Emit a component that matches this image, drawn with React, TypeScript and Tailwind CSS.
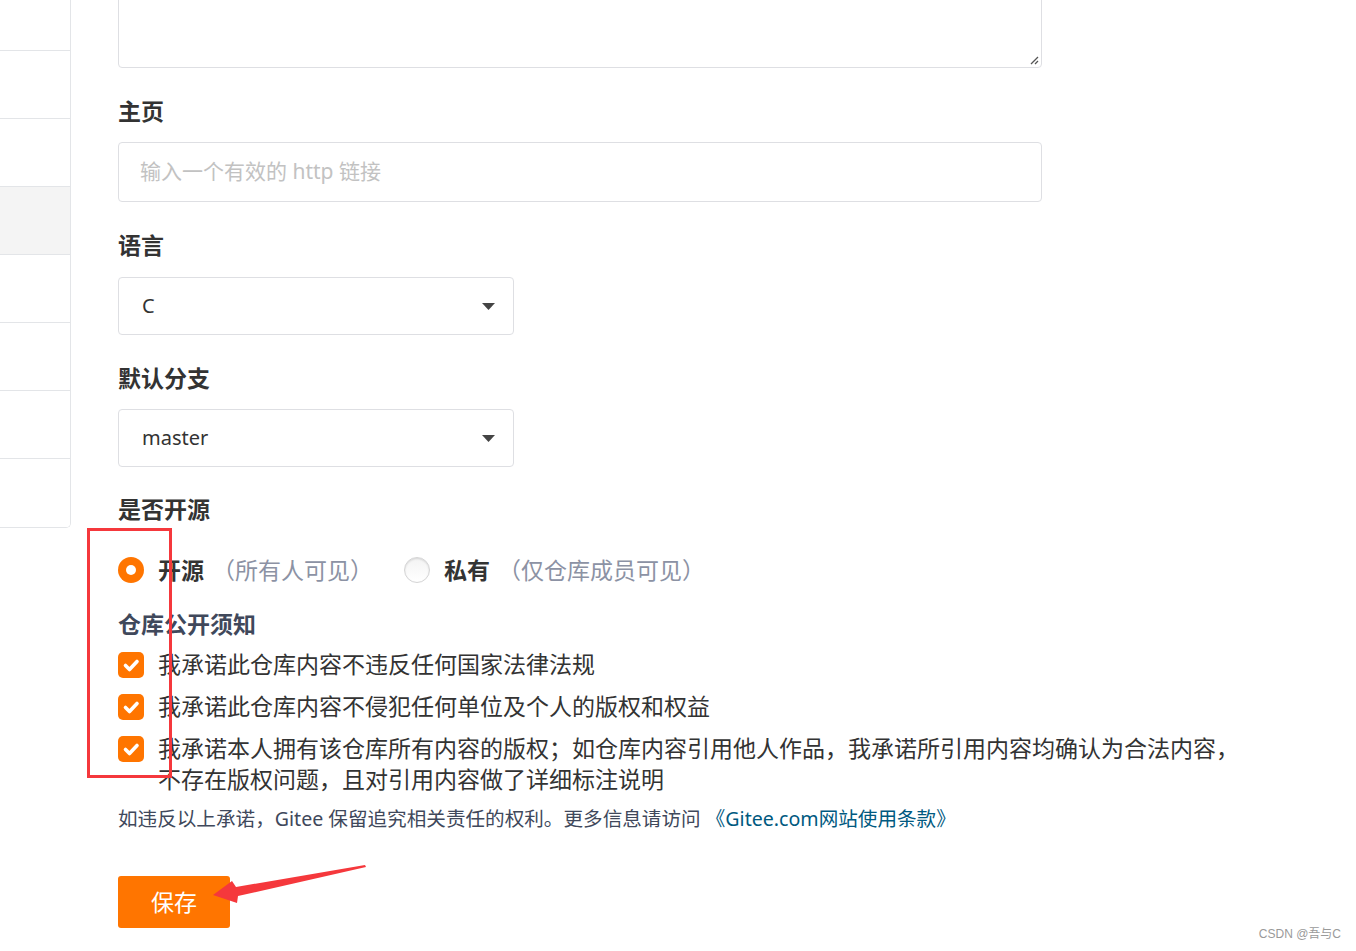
const font = "font-['Noto_Sans','Noto_Sans_CJK_SC',sans-serif]";

function Label({ children }: { children: React.ReactNode }) {
  return <div className="text-[23px] leading-[30px] font-bold text-[#333]">{children}</div>;
}

function SelectBox({ value }: { value: string }) {
  return (
    <div className="w-[396px] h-[58px] border border-[#dedfe3] rounded-[4px] flex items-center justify-between pl-[23px] pr-[18px] text-[20px] text-[#333]">
      <span>{value}</span>
      <svg width="13" height="7" viewBox="0 0 13 7">
        <path d="M0 0 H13 L6.5 7 Z" fill="#444" />
      </svg>
    </div>
  );
}

function CheckItem({ children }: { children: React.ReactNode }) {
  return (
    <div className="flex items-start gap-[14px] w-[1140px]">
      <div className="mt-[3px] w-[26px] h-[26px] shrink-0 rounded-[5px] bg-[#ff7500] flex items-center justify-center">
        <svg width="26" height="26" viewBox="0 0 26 26">
          <path d="M7.5 13.5 L11.5 17.5 L19 9.5" fill="none" stroke="#fff" strokeWidth="3.6" strokeLinecap="round" strokeLinejoin="round" />
        </svg>
      </div>
      <div className="text-[23px] leading-[31px] text-[#333]">{children}</div>
    </div>
  );
}

export default function App() {
  const sideRows = [0, 1, 2, 3, 4, 5, 6, 7];
  return (
    <div className={`relative h-[951px] w-full overflow-hidden bg-white ${font}`}>
      <div className="flex">
        {/* left menu */}
        <div className="w-[71px] shrink-0 -mt-[17px] self-start border-r border-b border-[#e3e5e8] rounded-br-[5px] overflow-hidden">
          {sideRows.map((i) => (
            <div
              key={i}
              className={`h-[68px] ${i < 7 ? "border-b border-[#e3e5e8]" : ""} ${i === 3 ? "bg-[#f4f4f4]" : "bg-white"}`}
            />
          ))}
        </div>

        {/* form */}
        <div className="ml-[47px] flex flex-col">
          <div className="relative w-[924px] h-[101px] -mt-[33px] border border-[#dedfe3] rounded-[4px]">
            <svg className="absolute right-[2px] bottom-[2px]" width="10" height="10" viewBox="0 0 10 10">
              <path d="M9 2 L2 9 M9 6 L6 9" stroke="#555" strokeWidth="1.3" />
            </svg>
          </div>

          <div className="mt-[28px] mb-[16px]"><Label>主页</Label></div>
          <div className="w-[924px] h-[60px] border border-[#dedfe3] rounded-[4px] flex items-center px-[21px] text-[21px] text-[#c2c2c2]">
            输入一个有效的 http 链接
          </div>

          <div className="mt-[28px] mb-[17px]"><Label>语言</Label></div>
          <SelectBox value="C" />

          <div className="mt-[28px] mb-[16px]"><Label>默认分支</Label></div>
          <SelectBox value="master" />

          <div className="mt-[27px]"><Label>是否开源</Label></div>

          <div className="mt-[31px] flex items-center h-[30px] text-[23px]">
            <span className="w-[26px] h-[26px] rounded-full bg-[#ff7500] flex items-center justify-center">
              <span className="w-[10px] h-[10px] rounded-full bg-white" />
            </span>
            <span className="ml-[14px] font-bold text-[#333]">开源</span>
            <span className="ml-[8px] text-[#8c92a4]">（所有人可见）</span>
            <span className="ml-[31px] w-[26px] h-[26px] rounded-full border border-[#d4d4d5] bg-gradient-to-b from-[#f3f3f3] to-white shadow-[inset_0_1px_2px_rgba(0,0,0,0.12)]" />
            <span className="ml-[14px] font-bold text-[#333]">私有</span>
            <span className="ml-[8px] text-[#8c92a4]">（仅仓库成员可见）</span>
          </div>

          <div className="mt-[24px] text-[23px] leading-[30px] font-bold text-[#40485b]">仓库公开须知</div>

          <div className="mt-[10px] flex flex-col gap-[11px]">
            <CheckItem>我承诺此仓库内容不违反任何国家法律法规</CheckItem>
            <CheckItem>我承诺此仓库内容不侵犯任何单位及个人的版权和权益</CheckItem>
            <CheckItem>
              我承诺本人拥有该仓库所有内容的版权；如仓库内容引用他人作品，我承诺所引用内容均确认为合法内容，不存在版权问题，且对引用内容做了详细标注说明
            </CheckItem>
          </div>

          <div className="mt-[10px] text-[19.6px] leading-[28px] text-[#40485b] whitespace-nowrap">
            如违反以上承诺，Gitee 保留追究相关责任的权利。更多信息请访问{" "}
            <a className="text-[#005980]">《Gitee.com网站使用条款》</a>
          </div>

          <button className="mt-[43px] w-[112px] h-[52px] rounded-[3px] bg-[#ff7500] text-white text-[23px]">
            保存
          </button>
        </div>
      </div>

      {/* red annotation overlays */}
      <div className="absolute left-[87px] top-[528px] w-[85px] h-[250px] border-[3px] border-[#f5383c]" />
      <svg className="absolute left-0 top-0 pointer-events-none" width="1356" height="951">
        <path d="M213 895 L232 881 L236 887 L365 865 L366 867 L238 896 L237 903 Z" fill="#f5383c" />
      </svg>

      <div className="absolute right-[15px] bottom-[8px] text-[12px] text-[#9a9a9a] font-['Liberation_Sans','Noto_Sans_CJK_SC',sans-serif]">
        CSDN @吾与C
      </div>
    </div>
  );
}
